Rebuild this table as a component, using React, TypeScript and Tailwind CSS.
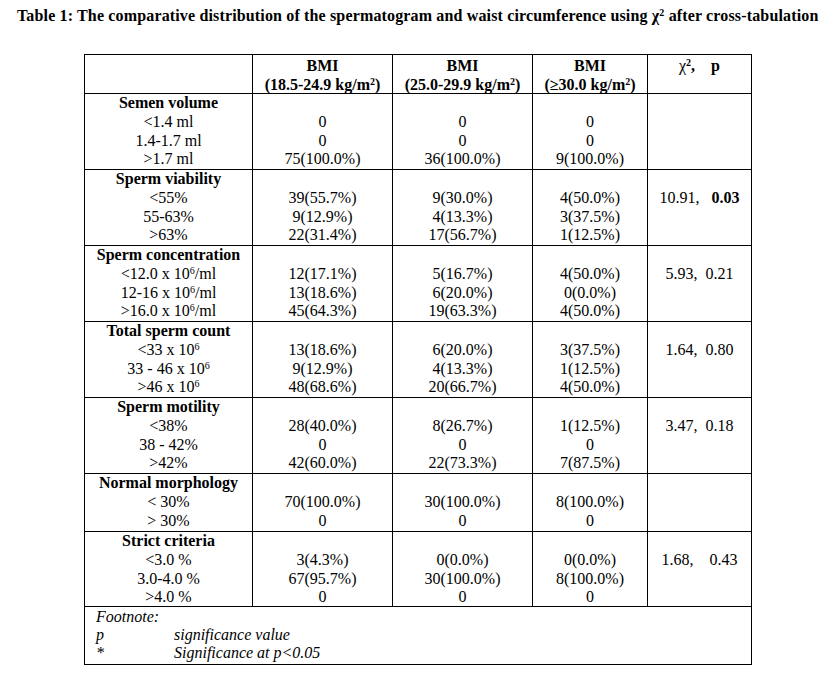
import React from 'react';

type Section = {
  title: string;
  rows: React.ReactNode[][];
  stat?: React.ReactNode;
  h: string;
};

const six = <sup className="text-[10px]">6</sup>;

const sections: Section[] = [
  {
    title: 'Semen volume',
    h: 'h-[76px]',
    rows: [
      ['<1.4 ml', '0', '0', '0'],
      ['1.4-1.7 ml', '0', '0', '0'],
      ['>1.7 ml', '75(100.0%)', '36(100.0%)', '9(100.0%)'],
    ],
  },
  {
    title: 'Sperm viability',
    h: 'h-[76px]',
    rows: [
      ['<55%', '39(55.7%)', '9(30.0%)', '4(50.0%)'],
      ['55-63%', '9(12.9%)', '4(13.3%)', '3(37.5%)'],
      ['>63%', '22(31.4%)', '17(56.7%)', '1(12.5%)'],
    ],
    stat: (
      <>
        {'10.91,   '}
        <b>0.03</b>
      </>
    ),
  },
  {
    title: 'Sperm concentration',
    h: 'h-[76px]',
    rows: [
      [<>{'<12.0 x 10'}{six}/ml</>, '12(17.1%)', '5(16.7%)', '4(50.0%)'],
      [<>{'12-16 x 10'}{six}/ml</>, '13(18.6%)', '6(20.0%)', '0(0.0%)'],
      [<>{'>16.0 x 10'}{six}/ml</>, '45(64.3%)', '19(63.3%)', '4(50.0%)'],
    ],
    stat: '5.93,  0.21',
  },
  {
    title: 'Total sperm count',
    h: 'h-[76px]',
    rows: [
      [<>{'<33 x 10'}{six}</>, '13(18.6%)', '6(20.0%)', '3(37.5%)'],
      [<>{'33 - 46 x 10'}{six}</>, '9(12.9%)', '4(13.3%)', '1(12.5%)'],
      [<>{'>46 x 10'}{six}</>, '48(68.6%)', '20(66.7%)', '4(50.0%)'],
    ],
    stat: '1.64,  0.80',
  },
  {
    title: 'Sperm motility',
    h: 'h-[76px]',
    rows: [
      ['<38%', '28(40.0%)', '8(26.7%)', '1(12.5%)'],
      ['38 - 42%', '0', '0', '0'],
      ['>42%', '42(60.0%)', '22(73.3%)', '7(87.5%)'],
    ],
    stat: '3.47,  0.18',
  },
  {
    title: 'Normal morphology',
    h: 'h-[58px]',
    rows: [
      ['< 30%', '70(100.0%)', '30(100.0%)', '8(100.0%)'],
      ['> 30%', '0', '0', '0'],
    ],
  },
  {
    title: 'Strict criteria',
    h: 'h-[75px]',
    rows: [
      ['<3.0 %', '3(4.3%)', '0(0.0%)', '0(0.0%)'],
      ['3.0-4.0 %', '67(95.7%)', '30(100.0%)', '8(100.0%)'],
      ['>4.0 %', '0', '0', '0'],
    ],
    stat: '1.68,    0.43',
  },
];

const cell = 'border-r border-b border-black text-center leading-[18.75px]';

export default function App() {
  return (
    <div
      className="w-[830px] h-[682px] bg-white text-black text-[16px]"
      style={{ fontFamily: '"Liberation Serif", "Times New Roman", serif' }}
    >
      <div className="pl-[17px] pt-[6px] leading-[20px] font-bold whitespace-nowrap tracking-[0.15px]">
        Table 1: The comparative distribution of the spermatogram and waist circumference using χ
        <sup className="text-[10px]">2</sup> after cross-tabulation
      </div>

      <div className="ml-[84px] mt-[28px] w-[668px] border-l border-t border-black grid grid-cols-[168px_140px_140px_115px_104px]">
        {/* header */}
        <div className={`${cell} h-[39px]`} />
        {['(18.5-24.9 kg/m', '(25.0-29.9 kg/m', '(≥30.0 kg/m'].map((t) => (
          <div key={t} className={`${cell} h-[39px] font-bold pt-[1px] leading-[19px]`}>
            <div>BMI</div>
            <div>
              {t}
              <sup className="text-[10px]">2</sup>)
            </div>
          </div>
        ))}
        <div className={`${cell} h-[39px] font-bold pt-[1px] leading-[19px] whitespace-pre`}>
          <span className="font-normal">χ</span>
          <sup className="text-[10px]">2</sup>
          {',    p'}
        </div>

        {sections.map((s) => (
          <React.Fragment key={s.title}>
            <div className={`${cell} ${s.h}`}>
              <div className="font-bold">{s.title}</div>
              {s.rows.map((r, i) => (
                <div key={i}>{r[0]}</div>
              ))}
            </div>
            {[1, 2, 3].map((c) => (
              <div key={c} className={`${cell} ${s.h}`}>
                <div>&nbsp;</div>
                {s.rows.map((r, i) => (
                  <div key={i}>{r[c]}</div>
                ))}
              </div>
            ))}
            <div className={`${cell} ${s.h} whitespace-pre`}>
              <div>&nbsp;</div>
              <div>{s.stat}</div>
            </div>
          </React.Fragment>
        ))}

        {/* footnote */}
        <div className="col-span-5 h-[58px] border-r border-b border-black italic pl-[11px] pt-[1px] leading-[18px]">
          <div>Footnote:</div>
          <div className="flex">
            <span className="w-[78px]">p</span>
            <span>significance value</span>
          </div>
          <div className="flex">
            <span className="w-[78px]">*</span>
            <span>Significance at p&lt;0.05</span>
          </div>
        </div>
      </div>
    </div>
  );
}
